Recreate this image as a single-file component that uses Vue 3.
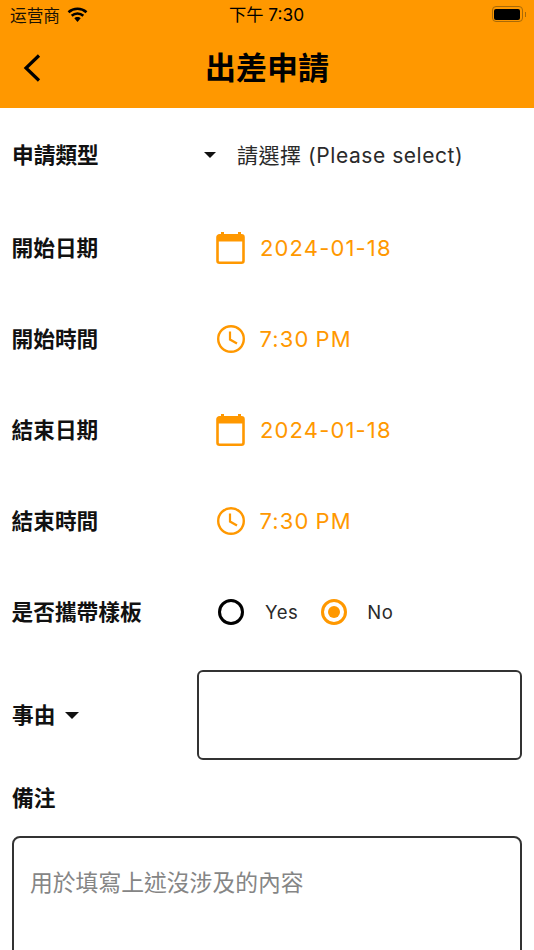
<script setup>
const rows = [
  { label: '開始日期', type: 'date', value: '2024-01-18' },
  { label: '開始時間', type: 'time', value: '7:30 PM' },
  { label: '結束日期', type: 'date', value: '2024-01-18' },
  { label: '結束時間', type: 'time', value: '7:30 PM' },
]
</script>

<template>
  <div class="page">
    <header class="header">
      <div class="status">
        <div class="status-left">
          <span class="carrier">运营商</span>
          <svg class="wifi" viewBox="0 0 21 16" width="21" height="16">
            <path d="M1.500 5.200C6.700.6 14.300.6 19.500 5.200" fill="none" stroke="#000" stroke-width="2.600" />
            <path d="M4.700 8.700c3.400-3 8.200-3 11.600 0" fill="none" stroke="#000" stroke-width="2.600" />
            <path d="M10.500 10c-1.300 0-2.400.5-3.200 1.300l3.200 3.700 3.200-3.700c-.8-.8-1.900-1.300-3.200-1.300z" fill="#000" />
          </svg>
        </div>
        <span class="clock">下午 7:30</span>
        <div class="battery-wrap">
          <div class="battery"><span class="battery-fill"></span></div>
          <span class="battery-nub"></span>
        </div>
      </div>
      <div class="nav">
        <svg class="back" viewBox="0 0 20 30" width="20" height="30">
          <path d="M17 2.500 4 15l13 12.500" fill="none" stroke="#000" stroke-width="3.200" />
        </svg>
        <h1 class="title">出差申請</h1>
      </div>
    </header>

    <main class="form">
      <div class="row row-first">
        <span class="label label-first">申請類型</span>
        <div class="select">
          <span class="caret"></span>
          <span class="select-text">請選擇 (Please select)</span>
        </div>
      </div>

      <div v-for="row in rows" :key="row.label" class="row">
        <span class="label">{{ row.label }}</span>
        <div class="picker">
          <svg v-if="row.type === 'date'" class="picker-icon" viewBox="0 0 30 32" width="30" height="32">
            <path d="M5 0h3v4H5zM22 0h3v4h-3z" fill="#ff9800" />
            <path d="M3.500 3.300h22a2 2 0 0 1 2 2v23.400a2 2 0 0 1-2 2h-22a2 2 0 0 1-2-2V5.300a2 2 0 0 1 2-2z" fill="none" stroke="#ff9800" stroke-width="2.600" />
            <path d="M2 3h25v6.500H2z" fill="#ff9800" />
          </svg>
          <svg v-else class="picker-icon" viewBox="0 0 30 30" width="30" height="30">
            <circle cx="15" cy="15" r="12.800" fill="none" stroke="#ff9800" stroke-width="2.400" />
            <path d="M14 7.500v8l7 4" fill="none" stroke="#ff9800" stroke-width="2.200" />
          </svg>
          <span class="picker-text" :class="{ 'picker-time': row.type === 'time' }">{{ row.value }}</span>
        </div>
      </div>

      <div class="row">
        <span class="label">是否攜帶樣板</span>
        <div class="radios">
          <span class="radio"></span>
          <span class="radio-label">Yes</span>
          <span class="radio radio-on"><span class="radio-dot"></span></span>
          <span class="radio-label radio-label-no">No</span>
        </div>
      </div>

      <div class="reason">
        <div class="reason-label">
          <span class="label">事由</span>
          <span class="caret caret-reason"></span>
        </div>
        <div class="reason-box"></div>
      </div>

      <div class="note-label"><span class="label">備注</span></div>
      <div class="note-box">
        <span class="placeholder">用於填寫上述沒涉及的內容</span>
      </div>
    </main>
  </div>
</template>

<style scoped>
.page {
  width: 534px;
  height: 950px;
  overflow: hidden;
  background: #fff;
  color: #000;
  font-family: Inter, "Noto Sans CJK TC", sans-serif;
}
.header {
  height: 108px;
  background: #ff9800;
  display: flex;
  flex-direction: column;
}
.status {
  height: 30px;
  padding: 0 8px 0 10px;
  display: grid;
  grid-template-columns: 1fr auto 1fr;
  align-items: center;
}
.status-left {
  display: flex;
  align-items: center;
  gap: 7px;
}
.carrier {
  font-family: "Noto Sans CJK SC", sans-serif;
  font-size: 16.700px;
  line-height: 30px;
  color: #1a1204;
}
.wifi {
  flex: none;
}
.clock {
  font-family: Inter, "Noto Sans CJK SC", sans-serif;
  font-size: 17.300px;
  font-weight: 400;
  line-height: 30px;
  margin-left: -3px;
}
.battery-wrap {
  justify-self: end;
  display: flex;
  align-items: center;
  gap: 2px;
  margin-top: -2px;
}
.battery {
  width: 31px;
  height: 16px;
  box-sizing: border-box;
  border: 1.500px solid #a86a08;
  border-radius: 4px;
  padding: 1.500px;
  display: flex;
}
.battery-fill {
  flex: 1;
  background: #000;
  border-radius: 2px;
}
.battery-nub {
  width: 1.500px;
  height: 5px;
  background: #a86a08;
}
.nav {
  height: 78px;
  padding: 0 22px;
  display: grid;
  grid-template-columns: 20px 1fr 20px;
  align-items: center;
}
.back {
  margin-top: -2px;
}
.title {
  margin: -2px 0 0;
  text-align: center;
  font-size: 31px;
  font-weight: 700;
  line-height: 40px;
  color: #000;
}
.form {
  display: flex;
  flex-direction: column;
}
.row {
  height: 91px;
  padding-left: 11.500px;
  display: grid;
  grid-template-columns: 204.500px 1fr;
  align-items: center;
}
.row-first {
  height: 94px;
}
.label {
  font-size: 21.700px;
  font-weight: 700;
  line-height: 30px;
  color: #111;
  white-space: nowrap;
}
.label-first {
  padding-left: 0.500px;
}
.select {
  display: flex;
  align-items: center;
  margin-left: -12px;
}
.caret {
  width: 0;
  height: 0;
  border-left: 6px solid transparent;
  border-right: 6px solid transparent;
  border-top: 6px solid #111;
  flex: none;
}
.select-text {
  margin-left: 21px;
  padding-top: 1px;
  font-size: 21px;
  line-height: 30px;
  color: #2a2a2a;
  letter-spacing: 0.550px;
  white-space: nowrap;
}
.picker {
  display: flex;
  align-items: center;
}
.picker-icon {
  flex: none;
}
.picker-text {
  margin-left: 14px;
  font-size: 22px;
  line-height: 30px;
  letter-spacing: 1.150px;
  color: #ff9800;
}
.picker-time {
  margin-left: 13.500px;
  word-spacing: -1.500px;
}
.radios {
  display: flex;
  align-items: center;
  padding-left: 1px;
}
.radio {
  width: 26px;
  height: 26px;
  box-sizing: border-box;
  border: 3px solid #000;
  border-radius: 50%;
  margin-left: 1px;
  display: flex;
  align-items: center;
  justify-content: center;
  flex: none;
}
.radio-on {
  border-color: #ff9800;
  margin-left: 1px;
}
.radio-dot {
  width: 12px;
  height: 12px;
  border-radius: 50%;
  background: #ff9800;
}
.radio-label {
  margin: 0 22px 0 21px;
  font-size: 18.500px;
  line-height: 26px;
  letter-spacing: 0.500px;
  color: #2a2a2a;
}
.radio-label-no {
  margin-left: 20px;
}
.reason {
  margin-top: 13px;
  height: 90px;
  padding: 0 12px;
  display: grid;
  grid-template-columns: 185px 1fr;
  align-items: center;
}
.reason-label {
  display: flex;
  align-items: center;
  gap: 10px;
}
.caret-reason {
  border-left-width: 7px;
  border-right-width: 7px;
  border-top-width: 7px;
}
.reason-box {
  height: 90px;
  box-sizing: border-box;
  border: 2px solid #333;
  border-radius: 6px;
}
.note-label {
  padding: 23px 12px 0;
  height: 53px;
  box-sizing: border-box;
}
.note-box {
  margin: 23px 12px 0;
  height: 200px;
  box-sizing: border-box;
  border: 2px solid #333;
  border-radius: 8px;
  padding: 28px 16px;
}
.placeholder {
  display: block;
  font-size: 22.800px;
  line-height: 34px;
  color: #858585;
  white-space: nowrap;
}
</style>
